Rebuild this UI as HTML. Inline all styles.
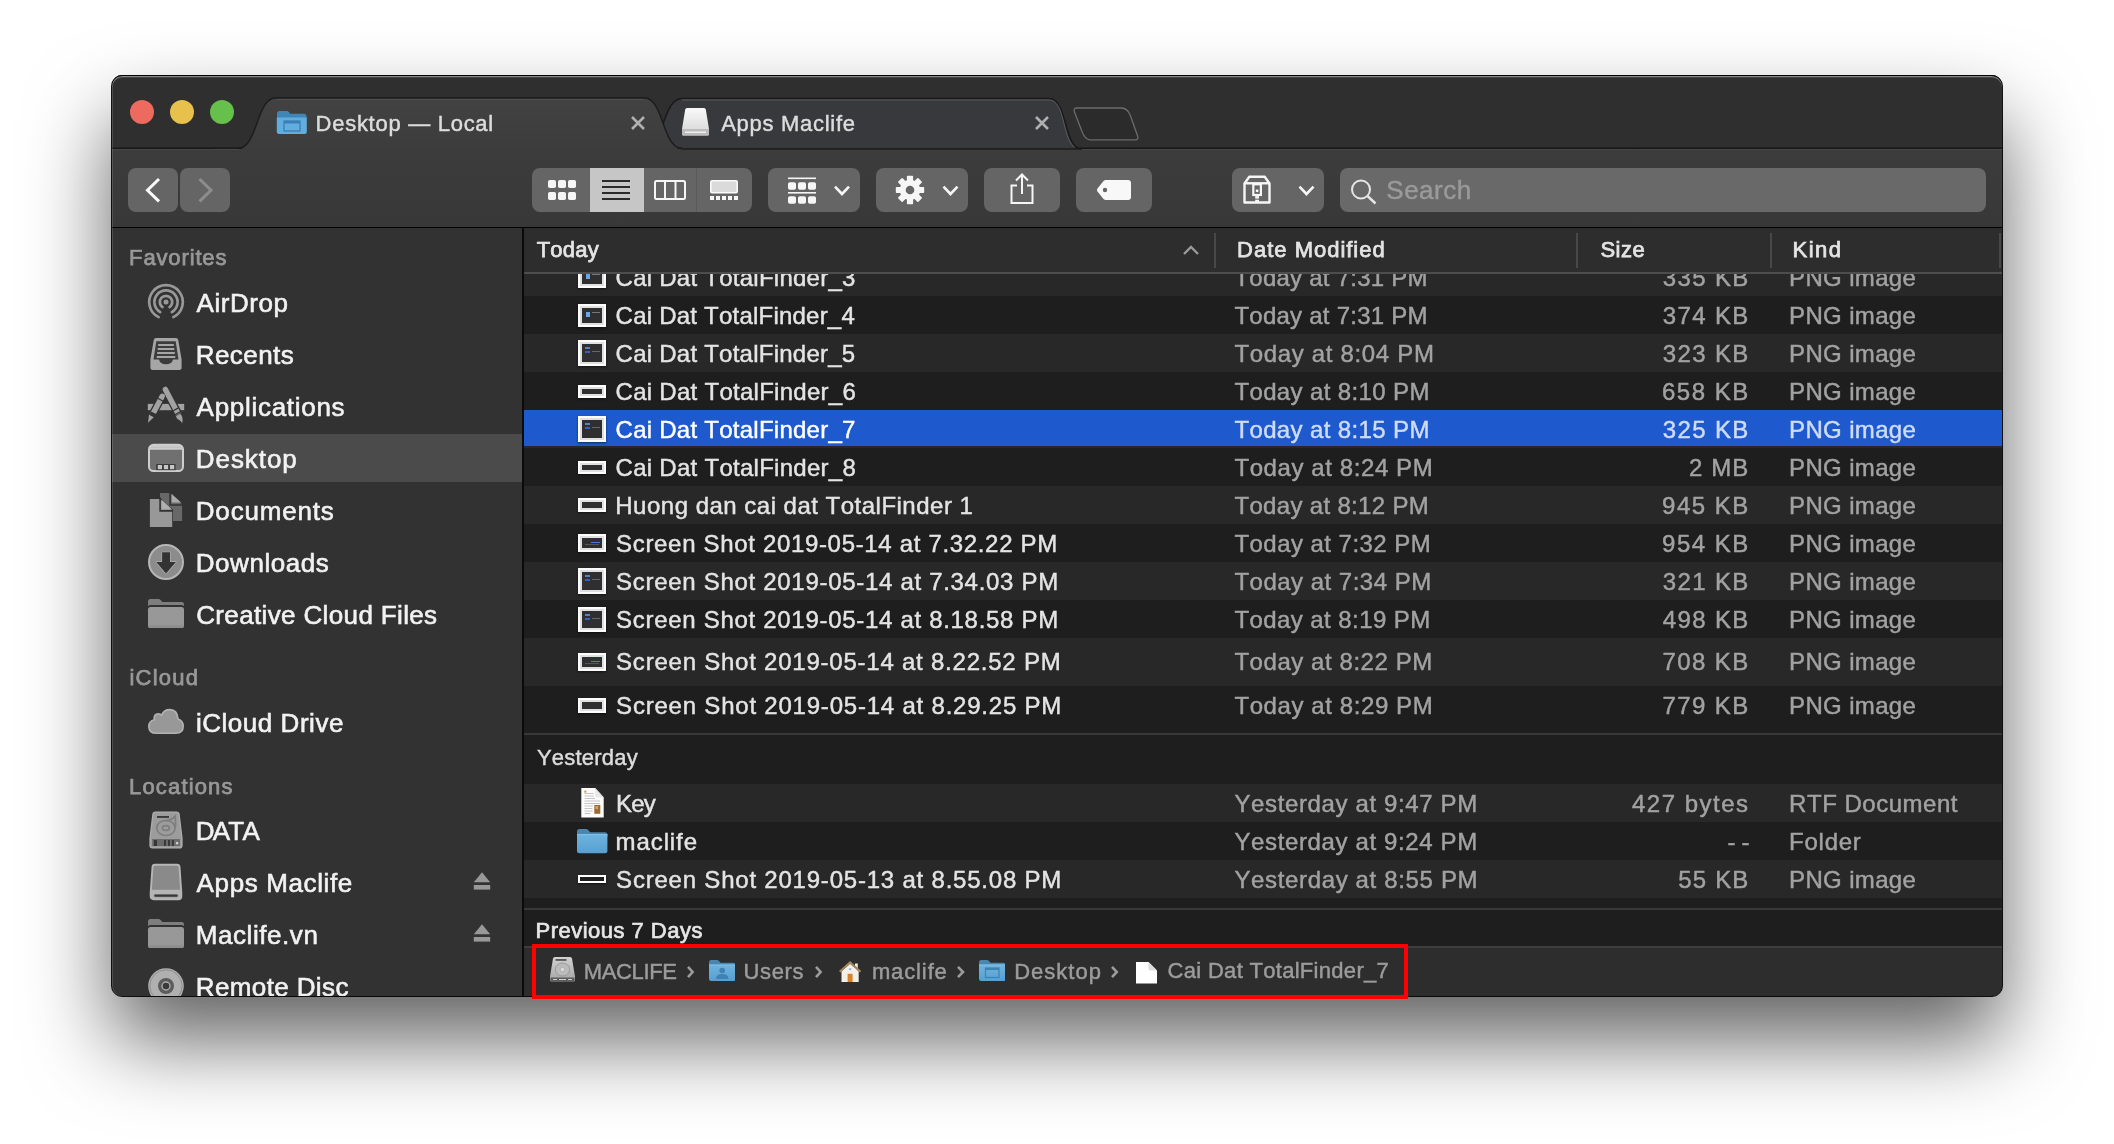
<!DOCTYPE html><html><head><meta charset="utf-8"><title>Finder</title><style>
*{box-sizing:border-box;margin:0;padding:0}
html,body{width:2114px;height:1144px;overflow:hidden;background:#fff}
body{position:relative;font-family:"Liberation Sans",sans-serif}
#win{will-change:transform;position:absolute;left:112px;top:75px;width:1890px;height:921px;border-radius:10px;background:#1e1e1e;overflow:hidden;z-index:2}
#shadow{position:absolute;left:112px;top:76px;width:1890px;height:920px;border-radius:10px;z-index:1;background:#222;
 box-shadow:0 44px 84px rgba(0,0,0,.62)}
#ring{position:absolute;left:111px;top:75px;width:1892px;height:922px;border:1px solid rgba(0,0,0,.92);border-radius:11px;z-index:3;box-shadow:inset 0 1px 0 rgba(255,255,255,.36),inset 0 2px 0 rgba(255,255,255,.10),inset 1px 0 0 rgba(255,255,255,.14)}
.abs{position:absolute}
.t{position:absolute;white-space:nowrap;line-height:1;font-kerning:none;-webkit-text-stroke:.45px}
#tabbar{position:absolute;left:0;top:0;width:1890px;height:74px;background:#2f2f2f}
#toolbar{position:absolute;left:0;top:73px;width:1890px;height:79px;background:linear-gradient(#3c3c3c,#383838)}
#tbline{position:absolute;left:0;top:152px;width:1890px;height:1px;background:#000}
.btn{position:absolute;top:93px;height:44px;background:#656565;border-radius:8px}
#sidebar{position:absolute;left:0;top:153px;width:410px;height:768px;background:#323232}
#sdiv{position:absolute;left:410px;top:153px;width:2px;height:768px;background:#0a0a0a}
.row{position:absolute;left:412px;width:1478px;height:38px}
.lt{background:#282828}
.sel{background:#282828}
.sel:after{content:'';position:absolute;left:0;top:0;width:100%;height:36px;background:#1e5ace}
.th{position:absolute;left:466px;width:28px;background:#2f2f31;border:2px solid #fdfdfd;box-shadow:inset 0 0 0 2px #e0e0e0,0 1px 2px rgba(0,0,0,.55)}
.th i{position:absolute;display:block}
#hdr{position:absolute;left:412px;top:153px;width:1478px;height:46px;background:#2d2d2d;border-bottom:2px solid #4d4d4d}
.hs{position:absolute;top:5px;width:2px;height:35px;background:#484848}
.sep{position:absolute;left:412px;width:1478px;height:2px;background:#383838}
#pathbar{position:absolute;left:412px;top:871px;width:1478px;height:50px;background:#2d2d2d;border-top:2px solid #3d3d3d}
#red{position:absolute;left:532px;top:944px;width:876px;height:55px;border:4px solid #fe0000;z-index:5}
</style></head><body>
<div id="shadow"></div><div id="win">
<div id="tabbar"></div><div id="toolbar"></div><div id="tbline"></div>
<div class="row lt" style="top:183px;height:38px"></div>
<div class="th" style="top:191.0px;height:22px"><i style="left:6px;top:6px;width:4px;height:5px;background:#6aa7e8"></i><i style="left:12px;top:6px;width:8px;height:1px;background:#777"></i></div>
<div class="th" style="top:228.5px;height:23px"><i style="left:6px;top:6px;width:4px;height:5px;background:#6aa7e8"></i><i style="left:12px;top:6px;width:8px;height:1px;background:#777"></i></div>
<div class="row lt" style="top:259px;height:38px"></div>
<div class="th" style="top:265.0px;height:26px"><i style="left:5px;top:5px;width:5px;height:2px;background:#5b7fc4"></i><i style="left:5px;top:9px;width:5px;height:2px;background:#2f62c9"></i><i style="left:12px;top:9px;width:8px;height:1px;background:#666"></i></div>
<div class="th" style="top:309.5px;height:13px"></div>
<div class="row sel" style="top:335px;height:38px"></div>
<div class="th" style="top:341.0px;height:26px"><i style="left:5px;top:5px;width:5px;height:2px;background:#5b7fc4"></i><i style="left:5px;top:9px;width:5px;height:2px;background:#2f62c9"></i><i style="left:12px;top:9px;width:8px;height:1px;background:#666"></i></div>
<div class="th" style="top:385.5px;height:13px"></div>
<div class="row lt" style="top:411px;height:38px"></div>
<div class="th" style="top:423.0px;height:14px"></div>
<div class="th" style="top:459.0px;height:18px"><i style="left:11px;top:6px;width:9px;height:1px;background:#4a78d0"></i><i style="left:5px;top:8px;width:14px;height:1px;background:#555"></i></div>
<div class="row lt" style="top:487px;height:38px"></div>
<div class="th" style="top:493.0px;height:26px"><i style="left:5px;top:5px;width:5px;height:2px;background:#5b7fc4"></i><i style="left:5px;top:9px;width:5px;height:2px;background:#2f62c9"></i><i style="left:12px;top:9px;width:8px;height:1px;background:#666"></i></div>
<div class="th" style="top:531.5px;height:25px"><i style="left:5px;top:5px;width:5px;height:2px;background:#5b7fc4"></i><i style="left:5px;top:9px;width:5px;height:2px;background:#2f62c9"></i><i style="left:12px;top:9px;width:8px;height:1px;background:#666"></i></div>
<div class="row lt" style="top:563px;height:48px"></div>
<div class="th" style="top:578.0px;height:18px"><i style="left:11px;top:6px;width:9px;height:1px;background:#4a78d0"></i><i style="left:5px;top:8px;width:14px;height:1px;background:#555"></i></div>
<div class="th" style="top:622.5px;height:15px"></div>
<div class="row lt" style="top:709px;height:38px"></div>
<svg class="abs" style="left:468.8px;top:713px" width="23" height="30" viewBox="0 0 23 30"><path d="M0.3 0h13.700l8.700 9.600v19.800h-22.400z" fill="#fdfdfd"/><path d="M14 0v7.600q0 2 2 2h6.700z" fill="#e9e9e9"/><path d="M14 0l8.700 9.600" stroke="#d0d0d0" stroke-width=".6"/><g stroke="#c4c4c4" stroke-width="1"><path d="M3.500 5.500h9M3.500 8h9.500M3.500 10.500h10.500M3.500 13h15.500M3.500 15.500h15.500M3.500 18h8.500M3.500 20.500h8M3.500 23h8M3.500 25.500h6"/></g><rect x="13.300" y="17" width="6" height="8.800" fill="#9c6a33"/><rect x="14.500" y="18" width="2.500" height="3" fill="#d9a25a"/><rect x="3.300" y="2.600" width="2" height="2" fill="#e58e2c"/></svg>
<svg class="abs" style="left:464.8px;top:753.9px" width="31" height="25" viewBox="0 0 31 25"><defs><linearGradient id="fg" x1="0" y1="0" x2="0" y2="1"><stop offset="0" stop-color="#6db4e0"/><stop offset="1" stop-color="#589fd0"/></linearGradient></defs><path d="M0 2.500Q0 0 2.500 0h6.500q1.300 0 2.200 0.900l2 2.300h14.700q2.500 0 2.500 2.500v2.300h-30.400z" fill="#4a86ad"/><path d="M0 5.200h30.400v16.600q0 2.500-2.500 2.500h-25.400q-2.500 0-2.500-2.500z" fill="url(#fg)"/><path d="M0 5.600h30.400" stroke="#8cc6ec" stroke-width=".8"/></svg>
<div class="row lt" style="top:785px;height:38px"></div>
<div class="th" style="top:800.0px;height:8px;box-shadow:0 1px 2px rgba(0,0,0,.55);background:#1c1c1c"></div>
<div class="sep" style="top:658px"></div><div class="sep" style="top:833px"></div>
<div class="t" style="left:503.6px;top:191.1px;font-size:24px;color:#e4e4e4;letter-spacing:0.25px">Cai Dat TotalFinder_3</div>
<div class="t" style="left:1122.4px;top:191.1px;font-size:24px;color:#a2a2a2;letter-spacing:0.25px">Today at 7:31 PM</div>
<div class="t" style="left:1550.7px;top:191.1px;font-size:24px;color:#a2a2a2;letter-spacing:1.38px">335 KB</div>
<div class="t" style="left:1677.1px;top:191.1px;font-size:24px;color:#a2a2a2;letter-spacing:0.34px">PNG image</div>
<div class="t" style="left:503.6px;top:229.1px;font-size:24px;color:#e4e4e4;letter-spacing:0.22px">Cai Dat TotalFinder_4</div>
<div class="t" style="left:1122.4px;top:229.1px;font-size:24px;color:#a2a2a2;letter-spacing:0.25px">Today at 7:31 PM</div>
<div class="t" style="left:1550.7px;top:229.1px;font-size:24px;color:#a2a2a2;letter-spacing:1.38px">374 KB</div>
<div class="t" style="left:1677.1px;top:229.1px;font-size:24px;color:#a2a2a2;letter-spacing:0.34px">PNG image</div>
<div class="t" style="left:503.6px;top:267.1px;font-size:24px;color:#e4e4e4;letter-spacing:0.24px">Cai Dat TotalFinder_5</div>
<div class="t" style="left:1122.4px;top:267.1px;font-size:24px;color:#a2a2a2;letter-spacing:0.67px">Today at 8:04 PM</div>
<div class="t" style="left:1550.7px;top:267.1px;font-size:24px;color:#a2a2a2;letter-spacing:1.38px">323 KB</div>
<div class="t" style="left:1677.1px;top:267.1px;font-size:24px;color:#a2a2a2;letter-spacing:0.34px">PNG image</div>
<div class="t" style="left:503.6px;top:305.1px;font-size:24px;color:#e4e4e4;letter-spacing:0.27px">Cai Dat TotalFinder_6</div>
<div class="t" style="left:1122.4px;top:305.1px;font-size:24px;color:#a2a2a2;letter-spacing:0.37px">Today at 8:10 PM</div>
<div class="t" style="left:1550.0px;top:305.1px;font-size:24px;color:#a2a2a2;letter-spacing:1.52px">658 KB</div>
<div class="t" style="left:1677.1px;top:305.1px;font-size:24px;color:#a2a2a2;letter-spacing:0.34px">PNG image</div>
<div class="t" style="left:503.6px;top:343.1px;font-size:24px;color:#ffffff;letter-spacing:0.25px">Cai Dat TotalFinder_7</div>
<div class="t" style="left:1122.4px;top:343.1px;font-size:24px;color:#cfdcf6;letter-spacing:0.37px">Today at 8:15 PM</div>
<div class="t" style="left:1550.7px;top:343.1px;font-size:24px;color:#cfdcf6;letter-spacing:1.38px">325 KB</div>
<div class="t" style="left:1677.1px;top:343.1px;font-size:24px;color:#cfdcf6;letter-spacing:0.34px">PNG image</div>
<div class="t" style="left:503.6px;top:381.1px;font-size:24px;color:#e4e4e4;letter-spacing:0.27px">Cai Dat TotalFinder_8</div>
<div class="t" style="left:1122.4px;top:381.1px;font-size:24px;color:#a2a2a2;letter-spacing:0.59px">Today at 8:24 PM</div>
<div class="t" style="left:1576.9px;top:381.1px;font-size:24px;color:#a2a2a2;letter-spacing:1.14px">2 MB</div>
<div class="t" style="left:1677.1px;top:381.1px;font-size:24px;color:#a2a2a2;letter-spacing:0.34px">PNG image</div>
<div class="t" style="left:503.3px;top:419.1px;font-size:24px;color:#e4e4e4;letter-spacing:0.49px">Huong dan cai dat TotalFinder 1</div>
<div class="t" style="left:1122.4px;top:419.1px;font-size:24px;color:#a2a2a2;letter-spacing:0.33px">Today at 8:12 PM</div>
<div class="t" style="left:1550.1px;top:419.1px;font-size:24px;color:#a2a2a2;letter-spacing:1.50px">945 KB</div>
<div class="t" style="left:1677.1px;top:419.1px;font-size:24px;color:#a2a2a2;letter-spacing:0.34px">PNG image</div>
<div class="t" style="left:504.1px;top:457.1px;font-size:24px;color:#e4e4e4;letter-spacing:0.67px">Screen Shot 2019-05-14 at 7.32.22 PM</div>
<div class="t" style="left:1122.4px;top:457.1px;font-size:24px;color:#a2a2a2;letter-spacing:0.46px">Today at 7:32 PM</div>
<div class="t" style="left:1550.1px;top:457.1px;font-size:24px;color:#a2a2a2;letter-spacing:1.50px">954 KB</div>
<div class="t" style="left:1677.1px;top:457.1px;font-size:24px;color:#a2a2a2;letter-spacing:0.34px">PNG image</div>
<div class="t" style="left:504.1px;top:495.1px;font-size:24px;color:#e4e4e4;letter-spacing:0.70px">Screen Shot 2019-05-14 at 7.34.03 PM</div>
<div class="t" style="left:1122.4px;top:495.1px;font-size:24px;color:#a2a2a2;letter-spacing:0.49px">Today at 7:34 PM</div>
<div class="t" style="left:1550.7px;top:495.1px;font-size:24px;color:#a2a2a2;letter-spacing:1.38px">321 KB</div>
<div class="t" style="left:1677.1px;top:495.1px;font-size:24px;color:#a2a2a2;letter-spacing:0.34px">PNG image</div>
<div class="t" style="left:504.1px;top:533.1px;font-size:24px;color:#e4e4e4;letter-spacing:0.70px">Screen Shot 2019-05-14 at 8.18.58 PM</div>
<div class="t" style="left:1122.4px;top:533.1px;font-size:24px;color:#a2a2a2;letter-spacing:0.43px">Today at 8:19 PM</div>
<div class="t" style="left:1550.7px;top:533.1px;font-size:24px;color:#a2a2a2;letter-spacing:1.39px">498 KB</div>
<div class="t" style="left:1677.1px;top:533.1px;font-size:24px;color:#a2a2a2;letter-spacing:0.34px">PNG image</div>
<div class="t" style="left:504.1px;top:574.7px;font-size:24px;color:#e4e4e4;letter-spacing:0.77px">Screen Shot 2019-05-14 at 8.22.52 PM</div>
<div class="t" style="left:1122.4px;top:574.7px;font-size:24px;color:#a2a2a2;letter-spacing:0.56px">Today at 8:22 PM</div>
<div class="t" style="left:1550.4px;top:574.7px;font-size:24px;color:#a2a2a2;letter-spacing:1.44px">708 KB</div>
<div class="t" style="left:1677.1px;top:574.7px;font-size:24px;color:#a2a2a2;letter-spacing:0.34px">PNG image</div>
<div class="t" style="left:504.1px;top:619.1px;font-size:24px;color:#e4e4e4;letter-spacing:0.79px">Screen Shot 2019-05-14 at 8.29.25 PM</div>
<div class="t" style="left:1122.4px;top:619.1px;font-size:24px;color:#a2a2a2;letter-spacing:0.59px">Today at 8:29 PM</div>
<div class="t" style="left:1550.4px;top:619.1px;font-size:24px;color:#a2a2a2;letter-spacing:1.44px">779 KB</div>
<div class="t" style="left:1677.1px;top:619.1px;font-size:24px;color:#a2a2a2;letter-spacing:0.34px">PNG image</div>
<div class="t" style="left:504.0px;top:717.1px;font-size:24px;color:#e4e4e4;letter-spacing:-0.84px">Key</div>
<div class="t" style="left:1122.4px;top:717.1px;font-size:24px;color:#a2a2a2;letter-spacing:0.63px">Yesterday at 9:47 PM</div>
<div class="t" style="left:1520.0px;top:717.1px;font-size:24px;color:#a2a2a2;letter-spacing:1.49px">427 bytes</div>
<div class="t" style="left:1677.1px;top:717.1px;font-size:24px;color:#a2a2a2;letter-spacing:0.52px">RTF Document</div>
<div class="t" style="left:503.6px;top:755.1px;font-size:24px;color:#e4e4e4;letter-spacing:0.90px">maclife</div>
<div class="t" style="left:1122.4px;top:755.1px;font-size:24px;color:#a2a2a2;letter-spacing:0.63px">Yesterday at 9:24 PM</div>
<div class="t" style="left:1615.5px;top:755.1px;font-size:24px;color:#a2a2a2;letter-spacing:6.00px">--</div>
<div class="t" style="left:1677.1px;top:755.1px;font-size:24px;color:#a2a2a2;letter-spacing:0.74px">Folder</div>
<div class="t" style="left:504.1px;top:793.1px;font-size:24px;color:#e4e4e4;letter-spacing:0.79px">Screen Shot 2019-05-13 at 8.55.08 PM</div>
<div class="t" style="left:1122.4px;top:793.1px;font-size:24px;color:#a2a2a2;letter-spacing:0.65px">Yesterday at 8:55 PM</div>
<div class="t" style="left:1566.3px;top:793.1px;font-size:24px;color:#a2a2a2;letter-spacing:1.17px">55 KB</div>
<div class="t" style="left:1677.1px;top:793.1px;font-size:24px;color:#a2a2a2;letter-spacing:0.34px">PNG image</div>
<div class="t" style="left:424.9px;top:672.4px;font-size:22px;color:#dcdcdc;letter-spacing:0.23px">Yesterday</div>
<div class="t" style="left:423.5px;top:845.4px;font-size:22px;color:#e6e6e6;letter-spacing:0.48px;-webkit-text-stroke:0.7px">Previous 7 Days</div>
<div id="hdr"><svg class="abs" style="left:658px;top:16px" width="18" height="12" viewBox="0 0 18 12"><path d="M2 10l7-7 7 7" fill="none" stroke="#9a9a9a" stroke-width="2.4"/></svg><div class="hs" style="left:690px"></div><div class="hs" style="left:1052px"></div><div class="hs" style="left:1246px"></div><div class="hs" style="left:1475px"></div></div>
<div id="pathbar"><svg class="abs" style="left:25.7px;top:9.3px" width="25" height="24.500" viewBox="0 0 25 24.500"><defs><linearGradient id="hg" x1="0" y1="0" x2="0" y2="1"><stop offset="0" stop-color="#d2d2d2"/><stop offset="1" stop-color="#a4a4a4"/></linearGradient></defs><path d="M4.800 0h15.400q1.500 0 1.800 1.500l3 18v3.500q0 1.500-1.500 1.500h-22q-1.500 0-1.500-1.500v-3.500l3-18q0.300-1.500 1.800-1.500z" fill="url(#hg)"/><ellipse cx="12.500" cy="12.500" rx="7.200" ry="6.500" fill="#bcbcbc" stroke="#909090" stroke-width=".8"/><circle cx="12.500" cy="12.500" r="2.400" fill="#d8d8d8" stroke="#9a9a9a" stroke-width=".6"/><path d="M0.500 20.500h24v2.500q0 1.500-1.500 1.500h-21q-1.500 0-1.500-1.500z" fill="#5c5c5c"/><path d="M3 22.500h4M9 22.500h7M18 22.500h4" stroke="#d0d0d0" stroke-width="1"/><rect x="5.500" y="2.200" width="11" height="1.500" fill="#3c3c3c"/></svg>
<svg class="abs" style="left:162.2px;top:16.7px" width="9.4" height="14" viewBox="0 0 9.4 14"><path d="M2 1.900l4.6 5.100-4.6 5.100" fill="none" stroke="#9c9c9c" stroke-width="2.600"/></svg>
<svg class="abs" style="left:184.9px;top:12.2px" width="26.500" height="21" viewBox="0 0 26.500 21"><defs><linearGradient id="pg708" x1="0" y1="0" x2="0" y2="1"><stop offset="0" stop-color="#6db4e0"/><stop offset="1" stop-color="#589fd0"/></linearGradient></defs><path d="M0 2.200q0-2.200 2.200-2.200h5.600q1.200 0 2 0.800l1.700 2h12.800q2.200 0 2.200 2.200v2h-26.500z" fill="#4a86ad"/><path d="M0 4.600h26.500v14.200q0 2.200-2.200 2.200h-22.100q-2.200 0-2.200-2.200z" fill="url(#pg708)"/><path d="M0 5h26.500" stroke="#8cc6ec" stroke-width=".7"/><circle cx="13.200" cy="10.500" r="2.800" fill="#3f81b3"/><path d="M7 19q0-5 6.200-5t6.200 5z" fill="#3f81b3"/></svg>
<svg class="abs" style="left:290.0px;top:16.7px" width="9.4" height="14" viewBox="0 0 9.4 14"><path d="M2 1.900l4.6 5.100-4.6 5.100" fill="none" stroke="#9c9c9c" stroke-width="2.600"/></svg>
<svg class="abs" style="left:314.8px;top:12.8px" width="22.200" height="21.500" viewBox="0 0 22.200 21.500"><rect x="16" y="2.500" width="2.800" height="6" fill="#efece4"/><path d="M11.100 2.500l8.600 7.800v11.200h-17.200v-11.200z" fill="#f3f0e8"/><path d="M11.100 0l11.100 10-1.400 1.600-9.700-8.700-9.700 8.700-1.400-1.600z" fill="#a4865e"/><rect x="8.600" y="12.800" width="5" height="8.700" fill="#d8832c"/><rect x="9.300" y="6.800" width="3.600" height="3" fill="#9fb8d6" stroke="#fff" stroke-width=".7"/></svg>
<svg class="abs" style="left:432.0px;top:16.7px" width="9.8" height="14" viewBox="0 0 9.8 14"><path d="M2 1.900l5.0 5.100-5.0 5.100" fill="none" stroke="#9c9c9c" stroke-width="2.600"/></svg>
<svg class="abs" style="left:454.8px;top:12.2px" width="26.500" height="21" viewBox="0 0 26.500 21"><defs><linearGradient id="pg978" x1="0" y1="0" x2="0" y2="1"><stop offset="0" stop-color="#6db4e0"/><stop offset="1" stop-color="#589fd0"/></linearGradient></defs><path d="M0 2.200q0-2.200 2.200-2.200h5.600q1.200 0 2 0.800l1.700 2h12.800q2.200 0 2.200 2.200v2h-26.500z" fill="#4a86ad"/><path d="M0 4.600h26.500v14.200q0 2.200-2.200 2.200h-22.100q-2.200 0-2.200-2.200z" fill="url(#pg978)"/><path d="M0 5h26.500" stroke="#8cc6ec" stroke-width=".7"/><rect x="6.500" y="8" width="13.500" height="9.500" fill="none" stroke="#3f81b3" stroke-width="1.200"/><rect x="6.500" y="8" width="13.500" height="2" fill="#3f81b3"/></svg>
<svg class="abs" style="left:586.1px;top:16.7px" width="9.6" height="14" viewBox="0 0 9.6 14"><path d="M2 1.900l4.8 5.100-4.8 5.100" fill="none" stroke="#9c9c9c" stroke-width="2.600"/></svg>
<svg class="abs" style="left:611.6px;top:14.0px" width="21" height="21.500" viewBox="0 0 21 21.500"><path d="M0 0h12.500l8.500 8.500v13h-21z" fill="#fefefe"/><path d="M12.500 0v6.500q0 2 2 2h6.500z" fill="#dcdcdc"/></svg></div>
<svg class="abs" style="left:0;top:0" width="1890" height="80" viewBox="0 0 1890 80">
<defs><linearGradient id="tg" x1="0" y1="0" x2="0" y2="1"><stop offset="0" stop-color="#424242"/><stop offset="1" stop-color="#3c3c3c"/></linearGradient></defs>
<rect x="0" y="72.500" width="1890" height="1.5" fill="#161616"/>
<rect x="0" y="74" width="1890" height="1" fill="#474747"/>
<path d="M532 74C552 74 550 23.5 570 23.5L937 23.5C956 23.5 951 74 970 74Z" fill="#38393c" stroke="#1a1a1a" stroke-width="1.6"/><path d="M570 25L937 25C953 25 950 62 962 72" fill="none" stroke="#5a5b5e" stroke-width="1"/>

<path d="M126 74.5C146 74.5 144 23.5 164 23.5L532 23.5C552 23.5 550 74.5 570 74.5L570 75.2L126 75.2Z" fill="url(#tg)"/>
<path d="M100 73.300L126 73.300C146 73.300 144 22.800 164 22.800L532 22.800C552 22.800 550 73.300 570 73.300" fill="none" stroke="#1d1d1d" stroke-width="1.5"/>
<path d="M165 24.500L531 24.500" stroke="#4e4e4e" stroke-width="1"/>
<path d="M965 33L1009 33Q1015.5 33 1018.3 40.5L1025.6 61Q1026.8 64.8 1023 64.8L978.3 64.8Q972.8 64.8 969.8 55.9L962.5 37.1Q961.2 33 965 33Z" fill="#2b2b2b" stroke="#6c6c6c" stroke-width="1.3"/>
<circle cx="30" cy="37" r="12" fill="#ed6a5e"/><circle cx="70" cy="37" r="12" fill="#e8c04c"/><circle cx="110" cy="37" r="12" fill="#67c04b"/>
<!-- desktop folder icon -->
<g transform="translate(164 34)">
<path d="M1 4.500Q1 2 3.500 2h7q1.500 0 2.300 1l1.400 1.800H28Q30.500 4.800 30.500 7.300V9H1z" fill="#3f86b8"/>
<path d="M0.800 8.500h30v14q0 2.500-2.500 2.500H3.300Q0.800 25 0.800 22.500z" fill="#62ade0"/>
<rect x="8" y="12" width="16" height="10" fill="none" stroke="#3b7fb3" stroke-width="1.3"/><rect x="8" y="12" width="16" height="2.500" fill="#3b7fb3"/>
</g>
<!-- close x -->
<path d="M520 42l12 12M532 42l-12 12" stroke="#b0b0b0" stroke-width="2.6"/>
<path d="M924 42l12 12M936 42l-12 12" stroke="#b0b0b0" stroke-width="2.6"/>
<!-- drive icon tab2 -->
<g transform="translate(570 32)">
<defs><linearGradient id="dg" x1="0" y1="0" x2="0" y2="1"><stop offset="0" stop-color="#fafafa"/><stop offset="1" stop-color="#d4d4d4"/></linearGradient></defs>
<path d="M5 1h17q1.500 0 1.800 1.500L27 22v5q0 1.500-1.500 1.500h-24Q0 28.500 0 27v-5L3.200 2.500Q3.500 1 5 1z" fill="url(#dg)"/>
<path d="M0 22h27v5q0 1.500-1.500 1.500h-24Q0 28.500 0 27z" fill="#bcbcbc"/><rect x="3" y="24.500" width="21" height="1.500" fill="#eee"/>
</g>
</svg>

<div class="btn" style="left:16px;width:50px"></div><div class="btn" style="left:68px;width:50px"></div>
<div class="btn" style="left:420px;width:220px"></div><div class="abs" style="left:478px;top:93px;width:54px;height:44px;background:#c6c6c6"></div>
<div class="abs" style="left:584px;top:93px;width:1px;height:44px;background:#5a5a5a"></div>
<div class="btn" style="left:656px;width:92px"></div><div class="btn" style="left:764px;width:92px"></div>
<div class="btn" style="left:872px;width:76px"></div><div class="btn" style="left:964px;width:76px"></div>
<div class="btn" style="left:1120px;width:92px"></div><div class="btn" style="left:1228px;width:646px;background:#696969"></div>
<svg class="abs" style="left:0;top:75px" width="1890" height="78" viewBox="112 150 1890 78">
<path d="M159 179l-11.500 11.200 11.500 11.200" fill="none" stroke="#fafafa" stroke-width="3"/>
<path d="M199.500 179l11.500 11.200-11.500 11.200" fill="none" stroke="#8d8d8d" stroke-width="3"/>
<rect x="548" y="180" width="8" height="8" rx="1.8" fill="#f6f6f6"/>
<rect x="558" y="180" width="8" height="8" rx="1.8" fill="#f6f6f6"/>
<rect x="568" y="180" width="8" height="8" rx="1.8" fill="#f6f6f6"/>
<rect x="548" y="192" width="8" height="8" rx="1.8" fill="#f6f6f6"/>
<rect x="558" y="192" width="8" height="8" rx="1.8" fill="#f6f6f6"/>
<rect x="568" y="192" width="8" height="8" rx="1.8" fill="#f6f6f6"/>
<rect x="602" y="180" width="28" height="2" fill="#2b2b2b"/>
<rect x="602" y="186" width="28" height="2" fill="#2b2b2b"/>
<rect x="602" y="192" width="28" height="2" fill="#2b2b2b"/>
<rect x="602" y="198" width="28" height="2" fill="#2b2b2b"/>
<rect x="655" y="181" width="30" height="18" rx="1.5" fill="none" stroke="#f6f6f6" stroke-width="2"/><path d="M665 181v18M675.500 181v18" stroke="#f6f6f6" stroke-width="2"/>
<rect x="710.8" y="180.8" width="26.4" height="12" rx="1.2" fill="#dadada" stroke="#fafafa" stroke-width="1.6"/>
<rect x="710" y="196" width="4" height="4" fill="#f6f6f6"/>
<rect x="716" y="196" width="4" height="4" fill="#f6f6f6"/>
<rect x="722" y="196" width="4" height="4" fill="#f6f6f6"/>
<rect x="728" y="196" width="4" height="4" fill="#f6f6f6"/>
<rect x="734" y="196" width="4" height="4" fill="#f6f6f6"/>
<rect x="788" y="177.500" width="28" height="1.600" fill="#f6f6f6"/><rect x="788" y="192" width="28" height="1.600" fill="#f6f6f6"/>
<rect x="788" y="182.2" width="8" height="7.6" rx="1.8" fill="#f6f6f6"/>
<rect x="798" y="182.2" width="8" height="7.6" rx="1.8" fill="#f6f6f6"/>
<rect x="808" y="182.2" width="8" height="7.6" rx="1.8" fill="#f6f6f6"/>
<rect x="788" y="196.2" width="8" height="7.6" rx="1.8" fill="#f6f6f6"/>
<rect x="798" y="196.2" width="8" height="7.6" rx="1.8" fill="#f6f6f6"/>
<rect x="808" y="196.2" width="8" height="7.6" rx="1.8" fill="#f6f6f6"/>
<path d="M835 186.7l7 7.3 7-7.3" fill="none" stroke="#f6f6f6" stroke-width="2.6"/>
<g fill="#f6f6f6"><circle cx="910" cy="190" r="10.2"/><rect x="906.9" y="175.8" width="6.2" height="8" rx="0.8" transform="rotate(0 910 190)"/><rect x="906.9" y="175.8" width="6.2" height="8" rx="0.8" transform="rotate(45 910 190)"/><rect x="906.9" y="175.8" width="6.2" height="8" rx="0.8" transform="rotate(90 910 190)"/><rect x="906.9" y="175.8" width="6.2" height="8" rx="0.8" transform="rotate(135 910 190)"/><rect x="906.9" y="175.8" width="6.2" height="8" rx="0.8" transform="rotate(180 910 190)"/><rect x="906.9" y="175.8" width="6.2" height="8" rx="0.8" transform="rotate(225 910 190)"/><rect x="906.9" y="175.8" width="6.2" height="8" rx="0.8" transform="rotate(270 910 190)"/><rect x="906.9" y="175.8" width="6.2" height="8" rx="0.8" transform="rotate(315 910 190)"/></g><circle cx="910" cy="190" r="4.3" fill="#656565"/>
<path d="M943.5 186.7l7 7.3 7-7.3" fill="none" stroke="#f6f6f6" stroke-width="2.6"/>
<path d="M1017 185.500h-5.500v17.500h21v-17.500h-5.500" fill="none" stroke="#f6f6f6" stroke-width="2"/><path d="M1022 194v-19M1016 180.500l6-6 6 6" fill="none" stroke="#f6f6f6" stroke-width="2"/>
<path d="M1106 180h22q3 0 3 3v14q0 3-3 3h-22q-1.500 0-2.500-1l-6-7.500q-1-1.500 0-3l6-7.500q1-1 2.500-1z" fill="#f8f8f8"/><circle cx="1105" cy="190" r="2.200" fill="#656565"/>
<path d="M1249.300 176.700h15.400l4.800 6.800v19h-25v-19z" fill="none" stroke="#f6f6f6" stroke-width="2.400" stroke-linejoin="round"/><path d="M1244.500 183.300h25" stroke="#f6f6f6" stroke-width="2.400"/><rect x="1253.300" y="184.300" width="7.600" height="10.700" fill="none" stroke="#f6f6f6" stroke-width="2.200"/><rect x="1255.800" y="189.500" width="2.600" height="2.600" fill="#f6f6f6"/><rect x="1255.200" y="196.100" width="3.800" height="2.500" fill="#f6f6f6"/><rect x="1255.200" y="199.700" width="3.800" height="2.600" fill="#f6f6f6"/>
<path d="M1299.5 186.7l7 7.3 7-7.3" fill="none" stroke="#f6f6f6" stroke-width="2.6"/>
<circle cx="1361" cy="189.500" r="9" fill="none" stroke="#e6e6e6" stroke-width="2"/><path d="M1367.500 196l8 7.500" stroke="#e6e6e6" stroke-width="2.400"/>
</svg>
<div id="sidebar"><div class="abs" style="left:0;top:206px;width:410px;height:48px;background:#4b4b4b"></div>
<svg class="abs" style="left:34px;top:54px" width="40" height="40" viewBox="0 0 40 40"><circle cx="20" cy="20" r="2.5" fill="#989898"/><path d="M16.44 25.08A6.2 6.2 0 1 1 23.56 25.08" fill="none" stroke="#989898" stroke-width="2.7" stroke-linecap="round"/><path d="M14.20 30.05A11.6 11.6 0 1 1 25.80 30.05" fill="none" stroke="#989898" stroke-width="2.7" stroke-linecap="round"/><path d="M12.64 35.10A16.8 16.8 0 1 1 27.36 35.10" fill="none" stroke="#989898" stroke-width="2.7" stroke-linecap="round"/></svg>
<svg class="abs" style="left:34px;top:106px" width="40" height="40" viewBox="0 0 40 40"><path d="M10 4h20q1.8 0 2.200 1.800l3.400 19.700v8q0 2.500-2.500 2.500h-26.200q-2.500 0-2.500-2.500v-8l3.400-19.700q0.400-1.800 2.200-1.800z" fill="#a6a6a6"/><path d="M10.300 7.200h19.400l2.800 18.300h-5.500q-1 4.700-7 4.700t-7-4.700h-5.500z" fill="#3c3c3c"/><path d="M12.200 11h15.600M11.700 15h16.600M11.200 19h17.600M10.700 23h18.600" stroke="#a6a6a6" stroke-width="2.100"/></svg>
<svg class="abs" style="left:34px;top:158px" width="40" height="40" viewBox="0 0 40 40"><rect x="1.800" y="17.900" width="36.400" height="6.300" fill="#a2a2a2"/><path d="M19.400 3.400L31.700 26.900" stroke="#323232" stroke-width="8" stroke-linecap="round"/><path d="M16.200 10.200L5.400 30.600" stroke="#323232" stroke-width="8" stroke-linecap="round"/><path d="M19.400 3.400L31.700 26.900" stroke="#a2a2a2" stroke-width="5.400" stroke-linecap="round"/><path d="M16.200 10.200L5.600 30.200" stroke="#a2a2a2" stroke-width="5.400" stroke-linecap="round"/><rect x="3" y="26" width="8" height="9" fill="#323232" transform="rotate(27.900 5.300 29.900)" /><path d="M3 28.700l4.800 2.500-5.800 5.600z" fill="#a2a2a2"/><path d="M11.800 12.300l5.400 2.900M27.200 24.700l5.200-2.800M29.300 28.500l5-2.700" stroke="#323232" stroke-width="1.300"/><path d="M29.500 29.800l4.700-2.500q3.800 3.600 2.500 9.800-0.300 0.700-1 0-1-2.200-3.600-3.400-2.600-1.500-2.600-3.900z" fill="#a2a2a2" stroke="#323232" stroke-width="0.800"/></svg>
<svg class="abs" style="left:34px;top:210px" width="40" height="40" viewBox="0 0 40 40"><rect x="3" y="6.800" width="34" height="26.300" rx="4.500" fill="#707070" stroke="#cdcdcd" stroke-width="2"/><path d="M3 11.800v-1q0-4 4-4h26q4 0 4 4v1z" fill="#cdcdcd"/><path d="M5 9.200h30" stroke="#bdbdbd" stroke-width="1"/><rect x="10.200" y="26" width="19.400" height="6.200" fill="#3c3c3c"/><rect x="11.800" y="27" width="4.200" height="4.200" fill="#c6c6c6"/><rect x="17.900" y="27" width="4.200" height="4.200" fill="#c6c6c6"/><rect x="24" y="27" width="4.200" height="4.200" fill="#c6c6c6"/></svg>
<svg class="abs" style="left:34px;top:262px" width="40" height="40" viewBox="0 0 40 40"><path d="M14 2.900h10.100l12 11.300v16.900h-22.100z" fill="#686868"/><path d="M24.100 1.500v13.500h13" fill="none" stroke="#323232" stroke-width="1.600"/><path d="M25.700 3.900v8.700h9.400z" fill="#ababab"/><path d="M3.900 8.900h10.200l12.100 11.100v17.100h-22.300z" fill="#989898" stroke="#323232" stroke-width="1.600" paint-order="stroke"/><path d="M14.100 7.500v13.400h13" fill="none" stroke="#323232" stroke-width="1.600"/><path d="M15.700 9.800v9.000h9.600z" fill="#b0b0b0"/></svg>
<svg class="abs" style="left:34px;top:314px" width="40" height="40" viewBox="0 0 40 40"><circle cx="20" cy="20" r="17" fill="#8c8c8c" stroke="#b6b6b6" stroke-width="2"/><path d="M16.100 10.300h7.900v9.700h5.900l-9.900 11.500-9.800-11.500h5.900z" fill="#333" stroke="#b0b0b0" stroke-width="1.300" stroke-linejoin="round" paint-order="stroke"/></svg>
<svg class="abs" style="left:34px;top:366px" width="40" height="40" viewBox="0 0 40 40"><path d="M2 7.500q0-2.500 2.500-2.500h8q1.300 0 2.100 1l1.700 2h19.200q2.500 0 2.500 2.500v1.500l-0.800-0.600q-0.700-0.500-1.700-0.500h-31q-1 0-1.700 0.500l-0.800 0.600z" fill="#7e7e7e"/><rect x="2" y="13" width="36" height="21" rx="2.600" fill="#989898"/><path d="M2 31.200h36v0.200q0 2.600-2.600 2.600h-30.800q-2.600 0-2.600-2.600z" fill="#8e8e8e"/></svg>
<svg class="abs" style="left:34px;top:474px" width="40" height="40" viewBox="0 0 40 40"><path d="M10.500 31.200q-7.700 0-7.700-6.700 0-5.300 5.500-6.700-0.800-6 4.100-6 2 0 3.300 1.300 2.300-5.500 8-5.500 7.700 0 8.300 9.300 5.200 1.800 5.200 7.300 0 7-7.500 7z" fill="#989898" stroke="#b2b2b2" stroke-width="1.600"/></svg>
<svg class="abs" style="left:34px;top:582px" width="40" height="40" viewBox="0 0 40 40"><path d="M9.500 2h21q2.300 0 2.600 2.300l2.900 24v7.200q0 2.500-2.500 2.500h-27q-2.500 0-2.500-2.500v-7.200l2.900-24q0.300-2.300 2.600-2.300z" fill="#9c9c9c" stroke="#b0b0b0" stroke-width="1.200"/><rect x="6.200" y="29" width="27.800" height="7" fill="#6c6c6c"/><rect x="7.800" y="30" width="3.200" height="6" fill="#383838"/><rect x="18" y="30" width="1.900" height="6" fill="#383838"/><rect x="22" y="30" width="1.900" height="6" fill="#383838"/><rect x="25.900" y="30" width="2" height="6" fill="#383838"/><rect x="29.900" y="32" width="2.300" height="2.300" fill="#d0d0d0"/><rect x="11" y="6" width="12" height="1.900" fill="#3a3a3a"/><ellipse cx="19.900" cy="18" rx="9.200" ry="7.500" fill="none" stroke="#7e7e7e" stroke-width="1.700"/><ellipse cx="19.900" cy="18" rx="3.500" ry="2.400" fill="none" stroke="#7e7e7e" stroke-width="1.600"/><path d="M19 10.700q6.500-0.500 10.300-4.600l0.300 11" fill="none" stroke="#7e7e7e" stroke-width="1.600"/></svg>
<svg class="abs" style="left:34px;top:634px" width="40" height="40" viewBox="0 0 40 40"><path d="M9 2.800h22q2.300 0 2.500 2.300l1.800 25.400v3.700q0 3-3 3h-24.600q-3 0-3-3v-3.700l1.800-25.400q0.200-2.300 2.500-2.300z" fill="#8a8a8a" stroke="#b6b6b6" stroke-width="1.900"/><path d="M5.200 27.800h29.600l0.500 3.200v3.200q0 3-3 3h-24.600q-3 0-3-3v-3.200z" fill="#b4b4b4"/><rect x="7.400" y="32" width="25.200" height="3.500" rx="1.700" fill="#9a9a9a"/><rect x="8.300" y="32.600" width="23.500" height="2.200" rx="1.100" fill="#383838"/></svg>
<svg class="abs" style="left:34px;top:686px" width="40" height="40" viewBox="0 0 40 40"><path d="M2 7.500q0-2.500 2.500-2.500h8q1.300 0 2.100 1l1.700 2h19.200q2.500 0 2.500 2.500v1.500l-0.800-0.600q-0.700-0.500-1.700-0.500h-31q-1 0-1.700 0.500l-0.800 0.600z" fill="#7e7e7e"/><rect x="2" y="13" width="36" height="21" rx="2.600" fill="#989898"/><path d="M2 31.200h36v0.200q0 2.600-2.600 2.600h-30.800q-2.600 0-2.600-2.600z" fill="#8e8e8e"/></svg>
<svg class="abs" style="left:34px;top:738px" width="40" height="40" viewBox="0 0 40 40"><circle cx="20" cy="20" r="17.800" fill="#b0b0b0"/><circle cx="20" cy="20" r="16.200" fill="none" stroke="#8e8e8e" stroke-width="1"/><circle cx="20" cy="20" r="8" fill="#5c5c5c"/><circle cx="20" cy="20" r="4" fill="#3a3a3a" stroke="#aaa" stroke-width="1.400"/></svg>
<svg class="abs" style="left:360px;top:643px" width="20" height="20" viewBox="0 0 20 20"><path d="M10 1.200l8.200 10h-16.400z" fill="#989898"/><rect x="1.800" y="14" width="16.400" height="4.600" fill="#989898"/></svg>
<svg class="abs" style="left:360px;top:695px" width="20" height="20" viewBox="0 0 20 20"><path d="M10 1.200l8.200 10h-16.400z" fill="#989898"/><rect x="1.800" y="14" width="16.400" height="4.600" fill="#989898"/></svg></div><div id="sdiv"></div>
<div class="t" style="left:424.7px;top:164.2px;font-size:22px;color:#e4e4e4;letter-spacing:0.21px;-webkit-text-stroke:0.75px">Today</div>
<div class="t" style="left:1125.1px;top:164.2px;font-size:22px;color:#e4e4e4;letter-spacing:0.99px;-webkit-text-stroke:0.75px">Date Modified</div>
<div class="t" style="left:1488.4px;top:164.2px;font-size:22px;color:#e4e4e4;letter-spacing:0.48px;-webkit-text-stroke:0.75px">Size</div>
<div class="t" style="left:1680.6px;top:164.2px;font-size:22px;color:#e4e4e4;letter-spacing:1.48px;-webkit-text-stroke:0.75px">Kind</div>
<div class="t" style="left:17.1px;top:172.4px;font-size:22px;color:#989898;letter-spacing:0.86px;-webkit-text-stroke:0.75px">Favorites</div>
<div class="t" style="left:17.4px;top:592.2px;font-size:22px;color:#989898;letter-spacing:1.25px;-webkit-text-stroke:0.75px">iCloud</div>
<div class="t" style="left:17.1px;top:700.5px;font-size:22px;color:#989898;letter-spacing:1.15px;-webkit-text-stroke:0.75px">Locations</div>
<div class="t" style="left:84.6px;top:214.6px;font-size:26px;color:#f2f2f2;letter-spacing:0.55px;-webkit-text-stroke:0.6px">AirDrop</div>
<div class="t" style="left:83.8px;top:266.6px;font-size:26px;color:#f2f2f2;letter-spacing:0.42px;-webkit-text-stroke:0.6px">Recents</div>
<div class="t" style="left:84.6px;top:318.6px;font-size:26px;color:#f2f2f2;letter-spacing:0.71px;-webkit-text-stroke:0.6px">Applications</div>
<div class="t" style="left:83.8px;top:370.6px;font-size:26px;color:#f2f2f2;letter-spacing:0.94px;-webkit-text-stroke:0.6px">Desktop</div>
<div class="t" style="left:83.8px;top:422.6px;font-size:26px;color:#f2f2f2;letter-spacing:0.80px;-webkit-text-stroke:0.6px">Documents</div>
<div class="t" style="left:83.8px;top:474.6px;font-size:26px;color:#f2f2f2;letter-spacing:0.53px;-webkit-text-stroke:0.6px">Downloads</div>
<div class="t" style="left:84.2px;top:526.6px;font-size:26px;color:#f2f2f2;letter-spacing:0.36px;-webkit-text-stroke:0.6px">Creative Cloud Files</div>
<div class="t" style="left:83.9px;top:634.6px;font-size:26px;color:#f2f2f2;letter-spacing:0.54px;-webkit-text-stroke:0.6px">iCloud Drive</div>
<div class="t" style="left:83.8px;top:742.6px;font-size:26px;color:#f2f2f2;letter-spacing:-1.79px;-webkit-text-stroke:0.6px">DATA</div>
<div class="t" style="left:84.6px;top:794.6px;font-size:26px;color:#f2f2f2;letter-spacing:0.62px;-webkit-text-stroke:0.6px">Apps Maclife</div>
<div class="t" style="left:83.8px;top:846.6px;font-size:26px;color:#f2f2f2;letter-spacing:0.56px;-webkit-text-stroke:0.6px">Maclife.vn</div>
<div class="t" style="left:83.8px;top:898.6px;font-size:26px;color:#f2f2f2;letter-spacing:0.38px;-webkit-text-stroke:0.6px">Remote Disc</div>
<div class="t" style="left:203.6px;top:38.2px;font-size:22px;color:#dddddd;letter-spacing:0.72px">Desktop — Local</div>
<div class="t" style="left:609.2px;top:38.2px;font-size:22px;color:#dddddd;letter-spacing:0.72px">Apps Maclife</div>
<div class="t" style="left:1274.3px;top:102.3px;font-size:26px;color:#9a9a9a;letter-spacing:0.51px">Search</div>
<div class="t" style="left:471.7px;top:885.7px;font-size:22px;color:#9c9c9c;letter-spacing:-0.34px">MACLIFE</div>
<div class="t" style="left:631.6px;top:885.7px;font-size:22px;color:#9c9c9c;letter-spacing:0.62px">Users</div>
<div class="t" style="left:759.9px;top:885.7px;font-size:22px;color:#9c9c9c;letter-spacing:0.88px">maclife</div>
<div class="t" style="left:902.2px;top:885.7px;font-size:22px;color:#9c9c9c;letter-spacing:1.00px">Desktop</div>
<div class="t" style="left:1055.6px;top:885.4px;font-size:22px;color:#9c9c9c;letter-spacing:0.30px">Cai Dat TotalFinder_7</div>
</div>
<div id="ring"></div><div id="red"></div>
</body></html>
